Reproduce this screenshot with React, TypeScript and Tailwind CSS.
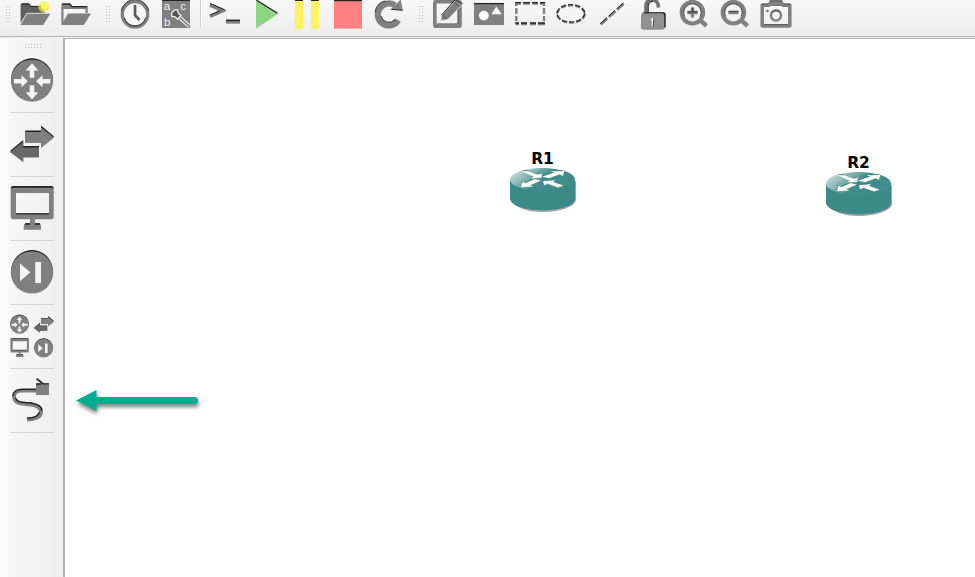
import type { ReactNode } from "react";

const G = "#808080";
const K = "#222222";
const L = "#f4f4f4";

function Tool({ label, children }: { label: string; children: ReactNode }) {
  return (
    <button aria-label={label} className="block h-9 w-10 shrink-0">
      <svg viewBox="-20 0 40 36" width="40" height="36" className="block overflow-visible">
        {children}
      </svg>
    </button>
  );
}

function Device({ label, children }: { label: string; children: ReactNode }) {
  return (
    <button aria-label={label} className="block h-16 w-11 shrink-0 border-b border-[#d4d4d4]">
      <svg viewBox="0 0 44 63" width="44" height="63" className="block">
        {children}
      </svg>
    </button>
  );
}

function Handle({ className }: { className: string }) {
  return (
    <div className={className}>
      <svg width="5" height="18" viewBox="0 0 5 18" fill="#bdbdbd">
        {[0, 3, 6, 9, 12, 15].map((y) => (
          <g key={y}>
            <rect x="0" y={y} width="1" height="1" />
            <rect x="3" y={y} width="1" height="1" />
          </g>
        ))}
      </svg>
    </div>
  );
}

function RouterGlyph() {
  return (
    <>
      <circle cx="22" cy="30.2" r="20.9" fill="#111" />
      <circle cx="22" cy="31.6" r="21.1" fill={G} />
      <g fill={L}>
        <path d="M22 14.3L28.3 21.6H24.3V28.8H19.7V21.6H15.7Z" />
        <path d="M22 50.5L28.3 43.2H24.3V36.2H19.7V43.2H15.7Z" />
        <path d="M17.8 32.3L11.5 38.3V34.6H4V30H11.5V26.3Z" />
        <path d="M26 32.3L32.5 26.3V30H40.3V34.6H32.5V38.3Z" />
      </g>
    </>
  );
}

function SwitchGlyph() {
  return (
    <>
      <path d="M15.3 17.5H31V12.5L44 23.5L31 34V29H15.3Z" fill={K} />
      <path d="M15.3 19H31V14.5L44 24.8L31 35V30H15.3Z" fill={G} />
      <path d="M29 33H13.2V27L0 38L13.2 48.5V44H29Z" fill={K} />
      <path d="M29 34.5H13.2V29L0 39L13.2 49V44.5H29Z" fill="#686868" />
    </>
  );
}

function MonitorGlyph() {
  return (
    <>
      <path d="M3 9H41.5Q43.7 9 43.7 12H.7Q.7 9 3 9Z" fill={K} />
      <path d="M3 10.7H41.5Q43.7 10.7 43.7 13V40Q43.7 42.3 41.5 42.3H25V46H28.5Q31 46 31 50V52.7H13.7V50Q13.7 46 17 46H20V42.3H3Q.7 42.3 .7 40V13Q.7 10.7 3 10.7ZM6 16V36.5H39V16Z" fill={G} fillRule="evenodd" />
      <path d="M6 36.8H39M15 47H20M25 47H30" stroke={K} strokeWidth="1.3" />
    </>
  );
}

function NextGlyph() {
  return (
    <>
      <circle cx="22" cy="30" r="20.9" fill="#111" />
      <circle cx="22" cy="31.4" r="21.2" fill={G} />
      <path d="M10 22.5L20.3 31.3L10 40.2ZM25.2 21H31V42H25.2Z" fill={L} />
    </>
  );
}

function Magnifier({ plus }: { plus?: boolean }) {
  return (
    <g transform="translate(.5 0)">
      <path d="M5 19.5L12 25.8" stroke={G} strokeWidth="4.4" />
      <circle cx="-2.1" cy="12.6" r="10.8" fill="none" stroke={G} strokeWidth="4" />
      <path d="M-9.8 16.5A8.7 8.7 0 1 1 5.7 16.5" fill="none" stroke="#4b4b4b" strokeWidth="1" />
      <path d={plus ? "M-7 12.5H3M-2 7.5V17.5" : "M-7 12.5H3"} stroke={G} strokeWidth="3.3" />
      <path d={plus ? "M-7 12H3M-2 7.5V12" : "M-7 11.5H3"} stroke="#484848" strokeWidth="1.3" />
    </g>
  );
}

function TopToolbar() {
  return (
    <header className="flex h-9 shrink-0 bg-linear-to-b from-[#f8f8f8] to-[#ececec]">
      <Handle className="w-[15px] shrink-0 pl-1.5 pt-1.5" />
      <div className="flex gap-px">
        <Tool label="New project">
          <path d="M-14.4 24V5Q-14.4 3.3-12.5 3.3H-6L-4 6H9.5V13H-8.5L-14.4 23Z" fill="#5e5e5e" />
          <path d="M-13.5 4H-6L-4 6.4H6" stroke={K} fill="none" />
          <path d="M-8 13.5H15.4L8.3 25H-14.5Z" fill={G} />
          <path d="M-8 13.2H15" stroke="#d8d8d8" strokeWidth=".8" />
          <circle cx="9" cy="6.8" r="5.7" fill="#f8ee43" opacity=".7" />
          <circle cx="9" cy="6.8" r="3" fill="#fff45a" />
        </Tool>
        <Tool label="Open project">
          <path d="M-14.7 24V5Q-14.7 3.3-13 3.3H-6L-4 6H11.7V13H9.5V9H-12.5V23Z" fill={G} />
          <path d="M-14 4.1H-6L-4 6.6H11" stroke={K} strokeWidth="1.4" fill="none" />
          <path d="M-8 13.5H15L7.8 25H-14.7Z" fill={G} />
        </Tool>
      </div>
      <Handle className="w-[19px] shrink-0 pl-2.5 pt-1.5" />
      <div className="flex gap-px">
        <Tool label="Snapshot">
          <circle cx="0" cy="14.2" r="12.7" fill="#f7f7f7" stroke={G} strokeWidth="3.4" />
          <path d="M-13.7 11A13.9 13.9 0 0 1 13.7 11M-10.6 18A11 11 0 0 0 10.6 18" fill="none" stroke="#333" strokeWidth="1" />
          <path d="M0 5V15.2L4.6 20" fill="none" stroke="#5c5c5c" strokeWidth="2.7" />
        </Tool>
        <Tool label="Show interface labels">
          <rect x="-14" y="0" width="28" height="28" fill={G} />
          <path d="M-14 .5H14" stroke={K} />
          <g fill="#f4f4f4" className="font-['Liberation_Sans',sans-serif] text-[11.5px]">
            <text x="-12.2" y="10.4">a</text>
            <text x="4.3" y="10.4">c</text>
            <text x="-11.9" y="25.5">b</text>
          </g>
          <g transform="translate(0 14.5) rotate(-48)">
            <path d="M-4.3-1.5L-2-4.2H2.5L4.5-1.8L2.6 .5L2.6 4.2H-2.4V.5Z" fill="#555" stroke="#f4f4f4" strokeWidth="1.3" />
            <path d="M-1.2 4.5V18M1.6 4.5V17.5" fill="none" stroke="#f4f4f4" strokeWidth="1.1" />
          </g>
        </Tool>
      </div>
      <div className="w-[9px] shrink-0 pl-1">
        <div className="h-7 w-0.5 border-l border-[#d0d0d0] bg-white" />
      </div>
      <div className="flex gap-px">
        <Tool label="Console">
          <path d="M-15 5L-2.3 10.7L-15 16.3" fill="none" stroke={G} strokeWidth="3.6" />
          <path d="M-15 3.5L-.2 9.8M-15 15.2L-5 10.8" stroke={K} strokeWidth="1" />
          <path d="M1 21.5H15" stroke={G} strokeWidth="4.3" />
          <path d="M1 20.5H15" stroke={K} strokeWidth="1.2" />
        </Tool>
        <Tool label="Start">
          <path d="M-10 0L12 13.7L-10 28.7Z" fill="#8bd682" />
          <path d="M-9.5 .2L11.5 13.3" stroke={K} strokeWidth="1.3" />
        </Tool>
        <Tool label="Suspend">
          <path d="M-12 0H-4V29H-12ZM4 0H11.8V29H4Z" fill="#fdf35d" />
          <path d="M-12 .5H-4M4 .5H11.8" stroke={K} />
        </Tool>
        <Tool label="Stop">
          <rect x="-14" y="0" width="28" height="28.6" fill="#ff8080" />
          <path d="M-14 .5H14" stroke={K} strokeWidth="1.4" />
        </Tool>
        <Tool label="Reload">
          <path d="M9.2 20.2A11 11 0 1 1 6 5.4" fill="none" stroke={G} strokeWidth="6.2" />
          <path d="M2 9.6L13.9 10.6L11.7-.5Z" fill={G} />
          <path d="M2 9.3L13.7 10.3M-8 16A8 8 0 0 0 6 19.5M-14 12Q-12 2-3 1" fill="none" stroke="#303030" strokeWidth="1" />
        </Tool>
      </div>
      <Handle className="w-[19px] shrink-0 pl-2.5 pt-1.5" />
      <div className="flex gap-px">
        <Tool label="Add a note">
          <rect x="-13.2" y="1.7" width="25.2" height="24.5" rx="1" fill="none" stroke={G} strokeWidth="3.6" />
          <path d="M-11 24H10V8" fill="none" stroke="#444" />
          <path d="M-7.3 21L-6.5 15L8 .2L14.8 4L.2 19.2Z" fill={G} stroke={L} strokeWidth=".7" />
          <path d="M-6 14.6L7-.2L14.5 3.5" stroke={K} fill="none" />
          <path d="M-5.5 15L-1 19M6 2L11 6.5" stroke="#555" />
        </Tool>
        <Tool label="Insert a picture">
          <rect x="-15" y="3" width="30" height="22" fill={G} />
          <path d="M-15 3.6H15" stroke={K} strokeWidth="1.3" />
          <circle cx="-5.2" cy="15.6" r="4.9" fill="#fafafa" />
          <path d="M7.3 6.5L12.8 14.3H2.4Z" fill="#fafafa" />
        </Tool>
        <Tool label="Draw rectangle">
          <g fill="none" stroke={G} strokeWidth="2.4">
            <path d="M-14.7 3.5H-9M-7 3.5H0M2 3.5H8M10 3.5H15M-14.7 24H-11M-9 24H-3M0 24H6M8 24H15" />
            <path d="M-13.7 2.5V6M-13.7 8V14M-13.7 16V21M14 2.5V6M14 8V14M14 16V21" />
          </g>
          <path d="M-14.7 2.6H-9M-7 2.6H0M2 2.6H8M10 2.6H15M-14.7 23H-11M-9 23H-3M0 23H6M8 23H15" stroke={K} strokeWidth="1.4" />
        </Tool>
        <Tool label="Draw ellipse">
          <ellipse cx="-.1" cy="14" rx="13.8" ry="8.7" fill="none" stroke={G} strokeWidth="2.3" strokeDasharray="5.3 1.9" />
          <ellipse cx="-.1" cy="13.3" rx="13.8" ry="8.7" fill="none" stroke={K} strokeWidth="1.1" strokeDasharray="5.3 1.9" />
        </Tool>
        <Tool label="Draw line">
          <path d="M-11.3 24.4L11.7 3.8" stroke={G} strokeWidth="2.7" strokeDasharray="8.8 2.2" />
          <path d="M-11.5 23.5L11.5 2.9" stroke={K} strokeWidth="1" strokeDasharray="8.8 2.2" />
        </Tool>
        <Tool label="Lock items">
          <path d="M-7 14V6Q-7 .5-1.5-.5Q5-.5 5.6 7.5" fill="none" stroke="#707070" strokeWidth="3.6" />
          <path d="M-4.8 13V5Q-4 1.5 0 1.2" fill="none" stroke="#111" />
          <rect x="-11" y="12.3" width="23.7" height="16" rx="2.5" fill="#111" />
          <rect x="-12" y="13.2" width="23.4" height="16.5" rx="2.5" fill="#919191" />
          <path d="M-2.2 19.3Q-.5 17 1 19.2Q1 21 .2 22V26H-1.5L-1 22Z" fill="#f8f8f8" />
          <path d="M.8 18.5V21L.2 26" fill="none" stroke="#222" strokeWidth=".8" />
        </Tool>
        <Tool label="Zoom in"><Magnifier plus /></Tool>
        <Tool label="Zoom out"><Magnifier /></Tool>
        <Tool label="Screenshot">
          <path d="M-13.8 5.3H-7L-5 1.5H5L7 5.3H13.8V25.9H-13.8Z" fill="none" stroke={G} strokeWidth="3.5" strokeLinejoin="round" />
          <path d="M-6 3H6V6H-6Z" fill={G} />
          <path d="M-14.5 4H-8M8 4H14.5M-12 24.6H12M-6 1H6" stroke="#555" strokeWidth=".9" />
          <circle cx="0" cy="15.6" r="5" fill="none" stroke={G} strokeWidth="2.5" />
          <path d="M-5 12.7A6 6 0 0 1 5 12.7" fill="none" stroke="#444" strokeWidth=".9" />
          <circle cx="-8.5" cy="11" r="1.2" fill="#666" />
        </Tool>
      </div>
    </header>
  );
}

function DeviceBar() {
  return (
    <aside className="flex w-[63px] shrink-0 flex-col bg-linear-to-r from-[#fafafa] to-[#ededed] pl-2.5">
      <div className="h-[11px] shrink-0 pl-[15px] pt-1.5">
        <svg width="17" height="4" viewBox="0 0 17 4" fill="#bdbdbd" className="block">
          {[0, 3, 6, 9, 12, 15].map((x) => (
            <g key={x}>
              <rect x={x} y="0" width="1" height="1" />
              <rect x={x} y="3" width="1" height="1" />
            </g>
          ))}
        </svg>
      </div>
      <Device label="Routers"><RouterGlyph /></Device>
      <Device label="Switches"><SwitchGlyph /></Device>
      <Device label="End devices"><MonitorGlyph /></Device>
      <Device label="Security devices"><NextGlyph /></Device>
      <Device label="All devices">
        <g transform="translate(-.3 5.4) scale(.445)"><RouterGlyph /></g>
        <g transform="translate(24 5.4) scale(.455)"><SwitchGlyph /></g>
        <g transform="translate(.1 29.3) scale(.43)"><MonitorGlyph /></g>
        <g transform="translate(23.8 29.2) scale(.445)"><NextGlyph /></g>
      </Device>
      <Device label="Add a link">
        <path d="M27 21.5H12Q4 21.5 4 27.5Q4 33.5 12 34.5L21 35.5Q31 37 31 43Q31 50 17 50.5" fill="none" stroke={G} strokeWidth="3.8" />
        <path d="M27 20.3H12Q3 20.5 3 27M5.5 29Q7 33 13 33.3L21 34Q32 35.5 32 42M17 49.2Q28 49 29.5 43" fill="none" stroke={K} strokeWidth="1.3" />
        <path d="M26 14.5H31L25.8 10.7L27.2 9.2L34.5 14.5H39V26H26Z" fill={G} />
        <path d="M26.8 9.6L33 14.8H39M26 15H31" fill="none" stroke={K} strokeWidth="1.3" />
      </Device>
    </aside>
  );
}

const NODE_ARROWS = [
  "M13.5 4.2H19.5L28 7.8L32.7 6.8L32.2 10.6L22.5 11.1L25 9.7Z",
  "M34 9.6L46.5 5.3L42.5 4.4L55 4L53.8 8.6L50.6 7L40 11Z",
  "M25.5 12.3L31.2 13.6L20.5 18.2L23.5 19.4L12.5 19.9L13 14.9L16.5 16.3Z",
  "M34.2 14.2L45.5 13.4L43.5 15L54 18.6L49 20.2L38.7 16.6L35.3 18Z",
];

function RouterNode({ name, className }: { name: string; className: string }) {
  return (
    <div className={className}>
      <div className="h-[17px] pr-px text-center font-['DejaVu_Sans',sans-serif] text-[15.5px] leading-[19px] font-bold text-black">{name}</div>
      <svg width="68" height="46" viewBox="0 0 68 46" className="block">
        <defs>
          <linearGradient id={`top${name}`} x1="0" y1="0.2" x2="1" y2=".65">
            <stop offset="0" stopColor="#cfe2e1" />
            <stop offset=".22" stopColor="#94bfbd" />
            <stop offset=".52" stopColor="#3e8d8a" />
            <stop offset="1" stopColor="#3e8d8a" />
          </linearGradient>
        </defs>
        <path d="M3 14V34C5 40 18 45 34 45S66 40 67 33V14Z" fill="#a3a3a3" />
        <path d="M1 12.5V32C2 38.5 16 43.3 33.7 43.3S66 38.5 66 32V12.5Z" fill="#3c8a87" />
        <ellipse cx="33.5" cy="12.5" rx="32.5" ry="11.5" fill={`url(#top${name})`} />
        <g fill="#276b69" transform="translate(-.7 -.9)">
          {NODE_ARROWS.map((d) => <path key={d} d={d} />)}
        </g>
        <g fill="#fff" stroke="#fff" strokeWidth=".5">
          {NODE_ARROWS.map((d) => <path key={d} d={d} />)}
        </g>
      </svg>
    </div>
  );
}

function Canvas() {
  return (
    <main className="relative flex-1 overflow-hidden bg-white">
      <RouterNode name="R1" className="absolute left-[444px] top-[111px] w-[68px]" />
      <RouterNode name="R2" className="absolute left-[760px] top-[115px] w-[68px]" />
      <svg width="140" height="36" viewBox="0 0 140 36" className="absolute left-[5px] top-[346px]">
        <g className="drop-shadow-[1px_3px_2px_rgba(0,0,0,0.5)]">
          <path d="M6 15.5L26.5 5V12H124.5Q128 12 128 15.5T124.5 19H26.5V26Z" fill="#06ad91" />
        </g>
      </svg>
    </main>
  );
}

export default function App() {
  return (
    <div className="flex h-[577px] w-[975px] flex-col overflow-hidden bg-[#f0f0f0]">
      <TopToolbar />
      <div className="h-0.5 shrink-0 border-t border-[#b4b4b4] bg-[#eeeeee]" />
      <div className="flex min-h-0 flex-1">
        <DeviceBar />
        <div className="flex flex-1 border-l-2 border-t border-[#b4b4b4]">
          <Canvas />
        </div>
      </div>
    </div>
  );
}
